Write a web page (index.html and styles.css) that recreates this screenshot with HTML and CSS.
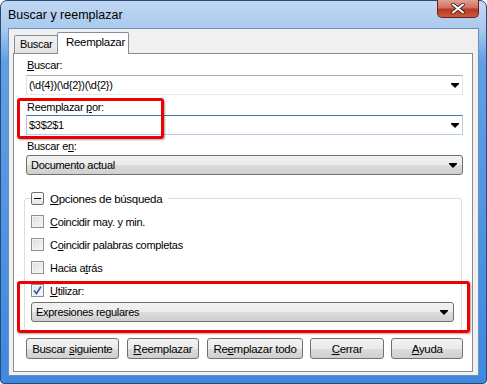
FILE: index.html
```html
<!DOCTYPE html>
<html>
<head>
<meta charset="utf-8">
<link rel="stylesheet" href="styles.css">
</head>
<body>
<div class="window">
  <div class="titlebar">
    <span class="title">Buscar y reemplazar</span>
    <div class="close">
      <svg width="14" height="11" viewBox="0 0 14 11"><path d="M2 1.5 L12 9.5 M12 1.5 L2 9.5" stroke="#4a2020" stroke-width="3.6" stroke-linecap="round"/><path d="M2 1.5 L12 9.5 M12 1.5 L2 9.5" stroke="#fff" stroke-width="2" stroke-linecap="round"/></svg>
    </div>
  </div>
  <div class="client">
    <div class="tabs">
      <div class="tab">Buscar</div>
      <div class="tab active">Reemplazar</div>
    </div>
    <div class="panel">
      <div class="label l1"><u>B</u>uscar:</div>
      <div class="combo edit first"><span>(\d{4})(\d{2})(\d{2})</span><span class="arrow"></span></div>
      <div class="label l2">Reemplazar <u>p</u>or:</div>
      <div class="combo edit focus"><span>$3$2$1</span><span class="arrow"></span></div>
      <div class="label l3">Buscar e<u>n</u>:</div>
      <div class="combo list where"><span>Documento actual</span><span class="arrow"></span></div>
      <div class="group">
        <div class="group-head"><span class="expander"></span><span class="head-text"><u>O</u>pciones de búsqueda</span></div>
        <div class="check"><span class="box"></span><span><u>C</u>oincidir may. y min.</span></div>
        <div class="check"><span class="box"></span><span>C<u>o</u>incidir palabras completas</span></div>
        <div class="check"><span class="box"></span><span>Hacia a<u>t</u>rás</span></div>
        <div class="check"><span class="box checked"><svg width="11" height="11" viewBox="0 0 11 11"><path d="M2 5.5 L4.5 8.5 L9 1.5" fill="none" stroke="#3a5fa8" stroke-width="1.7"/></svg></span><span><u>U</u>tilizar:</span></div>
        <div class="combo list inner"><span>Expresiones regulares</span><span class="arrow"></span></div>
      </div>
      <div class="buttons">
        <div class="btn b1"><span>Buscar <u>s</u>iguiente</span></div>
        <div class="btn b2"><span><u>R</u>eemplazar</span></div>
        <div class="btn b3"><span>Re<u>e</u>mplazar todo</span></div>
        <div class="btn b4"><span><u>C</u>errar</span></div>
        <div class="btn b5"><span><u>A</u>yuda</span></div>
      </div>
    </div>
    <div class="mark m1"></div>
    <div class="mark m2"></div>
  </div>
</div>
</body>
</html>
```
FILE: styles.css
```css
* { box-sizing: border-box; }
html, body { margin: 0; padding: 0; }
body { width: 487px; height: 384px; overflow: hidden; background: #fff; font-family: "Liberation Sans", Arial, sans-serif; font-size: 11px; letter-spacing: -0.3px; color: #000; }
u { text-decoration: underline; text-underline-offset: 1px; }

.window {
  width: 487px; height: 384px;
  border: 1px solid #2b4a73;
  border-radius: 7px 7px 4px 4px;
  background: linear-gradient(180deg, #c1d8f2 0px, #a9c9ee 28px, #5f9fe6 60px, #3f88e0 100%);
  display: flex; flex-direction: column;
  padding: 0 7px 7px 7px;
}
.titlebar { height: 27px; display: flex; align-items: flex-start; position: relative; }
.title { font-family: "Liberation Sans", Arial, sans-serif; font-size: 12.5px; letter-spacing: 0; margin: 7px 0 0 0; color: #000; }
.close {
  position: absolute; right: 0; top: -1px; width: 42px; height: 18px;
  border: 1px solid #6d1e1e; border-top: none; border-radius: 0 0 5px 5px;
  background: linear-gradient(180deg, #e0a196 0%, #d0715f 45%, #b83a23 55%, #c85b3f 100%);
  display: flex; align-items: center; justify-content: center;
}
.client {
  flex: 1; background: #f0f0f0; border: 1px solid #6e8fb8;
  position: relative; padding: 3px 5px 3px 4px;
  display: flex; flex-direction: column;
}
.tabs { display: flex; align-items: flex-end; height: 21px; padding-left: 1px; position: relative; z-index: 2; }
.tab {
  height: 18px; padding: 2px 5px 0 5px; border: 1px solid #898c95; border-bottom: none;
  background: linear-gradient(180deg, #f2f2f2, #e3e3e3); border-radius: 2px 2px 0 0;
  width: 44px;
}
.tab.active { height: 22px; width: 72px; background: #fff; padding: 3px 0 0 8px; margin-left: -1px; margin-bottom: -1px; font-size: 11.5px; }
.panel {
  flex: 1; background: #fff; border: 1px solid #898c95;
  display: flex; flex-direction: column; padding: 0 9px 0 12px;
}
.label { line-height: 14px; height: 14px; padding-left: 1px; }
.l1 { margin-top: 4px; }
.l2 { margin-top: 5px; }
.l3 { margin-top: 4px; }
.combo {
  height: 20px; position: relative; display: flex; align-items: center;
  padding-left: 2px; margin-top: 6px;
}
.combo.edit { background: #fff; border: 1px solid; border-color: #abadb3 #e3e9ef #e3e9ef #e2e3ea; }
.combo.edit.first { margin-top: 3px; }
.combo.edit.focus { border-color: #3d7bad #b5cfe7 #b5cfe7 #a4c9e3; margin-top: 1px; }
.combo.list {
  border: 1px solid #707070; border-radius: 3px; padding-left: 4px;
  background: linear-gradient(180deg, #f2f2f2 0%, #ebebeb 50%, #dddddd 51%, #cfcfcf 100%);
  margin-top: 5px;
}
.combo.list.where { margin-top: 2px; }
.arrow { position: absolute; right: 3px; top: 8px; width: 0; height: 0; border-left: 4px solid transparent; border-right: 4px solid transparent; border-top: 4px solid #000; }
.arrow::before { content: ""; position: absolute; left: -4px; top: -5px; width: 8px; height: 1px; background: #000; }
.combo.list .arrow { right: 5px; }

.group {
  margin-top: 23px; margin-left: -2px; margin-right: 1px;
  border: 1px solid #d5dfe5; border-radius: 3px; position: relative;
  padding: 0 6px 8px 6px; display: flex; flex-direction: column;
}
.group-head { display: flex; align-items: center; margin-top: -8px; height: 15px; }
.expander {
  width: 13px; height: 13px; border: 1px solid #6f6f6f; border-radius: 2px;
  background: linear-gradient(180deg, #fdfdfd, #e6e6e6); position: relative;
}
.expander::after { content: ""; position: absolute; left: 2px; top: 5px; width: 7px; height: 1px; background: #000; }
.head-text { background: #fff; padding: 0 6px 0 6px; font-size: 11.5px; }
.check { display: flex; align-items: center; height: 13px; margin-top: 10px; gap: 6px; }
.check:nth-child(2) { margin-top: 9px; }
.box {
  width: 13px; height: 13px; border: 1px solid #8e8f8f; background: linear-gradient(135deg, #dcdcdc, #f8f8f8);
  box-shadow: inset 0 0 0 1px #f4f4f4; display: flex; align-items: center; justify-content: center;
}
.box.checked { background: linear-gradient(135deg, #e4e4e4, #fafafa); }
.combo.inner { margin-top: 5px; margin-right: 1px; }

.buttons { display: flex; margin-top: 7px; height: 21px; }
.btn {
  height: 21px; border: 1px solid #707070; border-radius: 3px;
  background: linear-gradient(180deg, #f2f2f2 0%, #ebebeb 50%, #dddddd 51%, #cfcfcf 100%);
  display: flex; align-items: center; justify-content: center; font-size: 11.5px;
}
.b1 { width: 93px; }
.b2 { width: 73px; margin-left: 8px; }
.b3 { width: 96px; margin-left: 8px; }
.b4 { width: 75px; margin-left: 7px; }
.b5 { width: 72px; margin-left: 7px; }

.mark { position: absolute; border: 3px solid #ee0000; border-radius: 3px; box-shadow: 1px 1px 2px rgba(0,0,0,0.35); }
.m1 { left: 8px; top: 69px; width: 147px; height: 41px; }
.m2 { left: 8px; top: 252px; width: 453px; height: 52px; }
```
